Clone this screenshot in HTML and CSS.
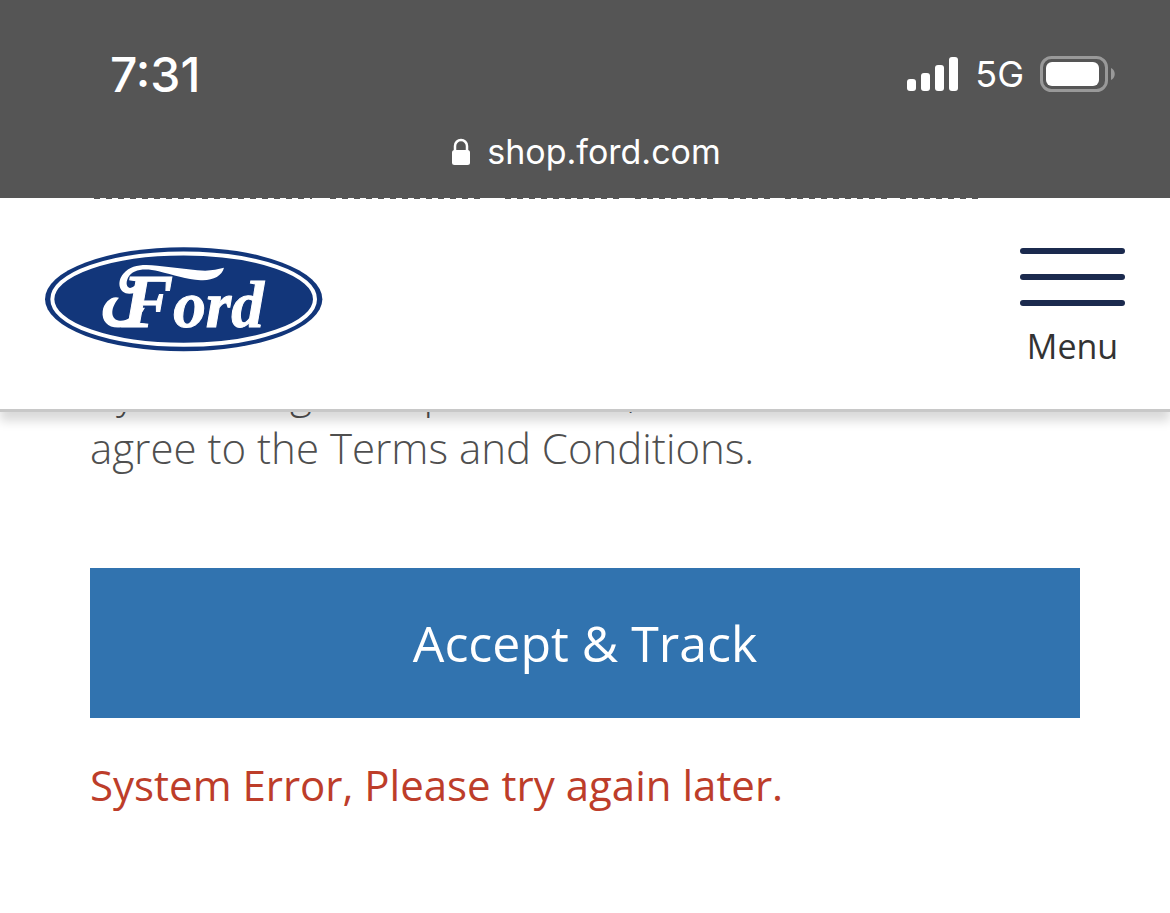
FILE: index.html
```
<!DOCTYPE html>
<html lang="en">
<head>
    <meta charset="UTF-8">
    <meta name="viewport" content="width=device-width, initial-scale=1.0">
    <title>Track Your Order</title>
    <link rel="stylesheet" href="styles.css">
</head>
<body>
    <div class="browser-bar">
        <div class="status-row">
            <span class="time">7:31</span>
            <div class="status-icons">
                <svg class="signal" viewBox="0 0 52 36" aria-hidden="true">
                    <rect x="0" y="23" width="9" height="12" rx="3"/>
                    <rect x="14" y="17" width="9" height="18" rx="3"/>
                    <rect x="28" y="9" width="9" height="26" rx="3"/>
                    <rect x="42" y="1" width="9" height="34" rx="3"/>
                </svg>
                <span class="network">5G</span>
                <svg class="battery" viewBox="0 0 76 36" aria-hidden="true">
                    <rect x="1.5" y="1.5" width="65" height="33" rx="10" fill="none" stroke="#999" stroke-width="3"/>
                    <rect x="6" y="6" width="53" height="24" rx="6" fill="#fff"/>
                    <path d="M71 12c5 2 5 10 0 12z" fill="#999"/>
                </svg>
            </div>
        </div>
        <div class="address">
            <svg class="lock" viewBox="0 0 20 28" aria-hidden="true">
                <path d="M4 13V8a6 6 0 0 1 12 0v5" fill="none" stroke="#fff" stroke-width="2.5"/>
                <rect x="1" y="12" width="18" height="15" rx="2.5" fill="#fff"/>
            </svg>
            <span>shop.ford.com</span>
        </div>
    </div>

    <svg class="scrolled-line" aria-hidden="true">
        <path d="M94 0.5H312M330 0.5H480M505 0.5H622M635 0.5H715M728 0.5H770M785 0.5H888M900 0.5H980"/>
    </svg>

    <header class="site-header">
        <a href="#" class="logo" aria-label="Ford home">
            <svg viewBox="45 50 834 314">
                <ellipse cx="461" cy="206" rx="416" ry="156" fill="#12367a"/>
                <ellipse cx="461" cy="206" rx="394" ry="137" fill="none" stroke="#fff" stroke-width="12"/>
                <text x="276" y="290" class="wordmark"><tspan class="initial">F</tspan>ord</text>
                <!-- upper and lower flourishes -->
                <path d="M346 141C342 172 321 190 298 190C267 190 259 154 280 130C303 102 342 101 382 106L502 119C536 123 558 118 582 112C576 137 548 151 512 149C469 146 430 133 386 122C347 113 308 114 294 142C285 161 292 174 303 172C319 168 323 149 346 141Z" fill="#fff"/>
                <path d="M267 202C247 194 221 215 218 242C214 275 239 296 275 290C307 284 329 262 345 232L325 232C309 260 290 272 270 271C243 269 237 237 267 202Z" fill="#fff"/>
            </svg>
        </a>
        <button type="button" class="menu-button">
            <span class="bar"></span>
            <span class="bar"></span>
            <span class="bar"></span>
            <span class="menu-label">Menu</span>
        </button>
    </header>

    <main class="content">
        <p class="terms">By selecting “Accept &amp; Track”, I<br>agree to the Terms and Conditions.</p>
        <button type="button" class="accept-button">Accept &amp; Track</button>
        <p class="error-message" role="alert">System Error, Please try again later.</p>
    </main>
</body>
</html>
```
FILE: styles.css
```
* {
    box-sizing: border-box;
    margin: 0;
    padding: 0;
}

body {
    background-color: #fff;
    color: #4f4f4f;
    font-family: 'Open Sans', 'Noto Sans', sans-serif;
}

.browser-bar {
    background-color: #555;
    color: #fff;
    font-family: 'Inter', sans-serif;
    padding: 46px 54px 23px 110px;
}

.status-row {
    display: flex;
    justify-content: space-between;
    align-items: center;
    height: 56px;
}

.time {
    font-size: 48px;
    font-weight: 500;
}

.status-icons {
    display: flex;
    align-items: center;
    gap: 16px;
}

.signal {
    width: 52px;
    height: 36px;
    fill: #fff;
}

.network {
    font-size: 36px;
}

.battery {
    width: 76px;
    height: 36px;
}

.address {
    display: flex;
    justify-content: center;
    align-items: center;
    gap: 16px;
    margin: 26px 0 0 -54px;
    font-size: 34px;
    line-height: 47px;
}

.lock {
    width: 20px;
    height: 28px;
}

.scrolled-line {
    display: block;
    width: 100%;
    height: 1px;
    stroke: #555;
    stroke-dasharray: 6 6;
}

.site-header {
    position: relative;
    z-index: 1;
    display: flex;
    justify-content: space-between;
    align-items: flex-start;
    height: 213px;
    padding: 48px 45px 0;
    background-color: #fff;
    border-bottom: 3px solid #c8c8c8;
    box-shadow: 0 9px 10px rgba(0, 0, 0, 0.15);
}

.logo svg {
    display: block;
    width: 278px;
    height: 105px;
}

.wordmark {
    fill: #fff;
    stroke: #fff;
    stroke-width: 3px;
    font-family: 'Liberation Serif', serif;
    font-size: 196px;
    font-style: italic;
    font-weight: bold;
}

.initial {
    font-size: 230px;
}

.menu-button {
    display: flex;
    flex-direction: column;
    align-items: center;
    gap: 20px;
    padding-top: 1px;
    background: none;
    border: none;
    color: #333;
    font-family: inherit;
    cursor: pointer;
}

.bar {
    width: 105px;
    height: 6px;
    border-radius: 3px;
    background-color: #1b2a4e;
}

.menu-label {
    font-size: 34px;
    line-height: 40px;
}

.content {
    margin-top: -48px;
    padding: 0 90px;
}

.terms {
    font-size: 42px;
    font-weight: 300;
    line-height: 56px;
}

.accept-button {
    display: block;
    width: 100%;
    height: 150px;
    margin-top: 92px;
    background-color: #3173af;
    border: none;
    color: #fff;
    font-family: inherit;
    font-size: 50px;
    cursor: pointer;
}

.error-message {
    margin-top: 39px;
    color: #bd3d2a;
    font-size: 42px;
    line-height: 56px;
}
```
